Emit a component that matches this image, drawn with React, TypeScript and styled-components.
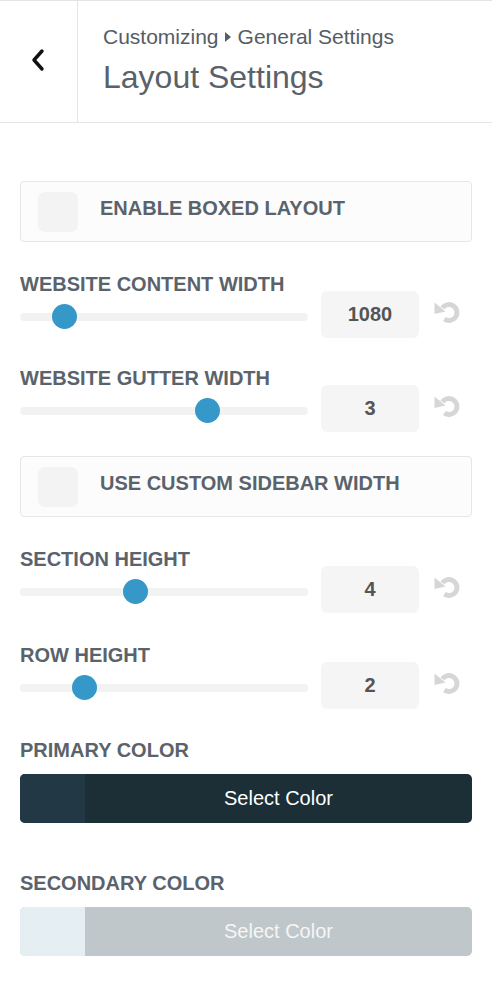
import React from "react";
import styled, { createGlobalStyle } from "styled-components";

const GlobalStyle = createGlobalStyle`
    html, body {
        margin: 0;
        padding: 0;
        background: #ffffff;
    }
    body {
        font-family: "Liberation Sans", Arial, sans-serif;
        color: #555d66;
    }
    * {
        box-sizing: border-box;
    }
`;

const Page = styled.div`
    width: 492px;
    min-height: 990px;
    background: #ffffff;
`;

const Header = styled.header`
    display: flex;
    height: 123px;
    border-top: 1px solid #e2e4e7;
    border-bottom: 1px solid #e2e4e7;
`;

const BackButton = styled.button`
    width: 78px;
    flex-shrink: 0;
    border: none;
    border-right: 1px solid #e2e4e7;
    background: #ffffff;
    display: flex;
    align-items: center;
    justify-content: center;
    padding: 0 1px 3px 0;
    cursor: pointer;
`;

const HeaderText = styled.div`
    padding: 24px 0 0 25px;
    display: flex;
    flex-direction: column;
    gap: 9px;
`;

const Breadcrumb = styled.div`
    display: flex;
    align-items: center;
    font-size: 21px;
    line-height: 24px;
    color: #555d66;
`;

const Caret = styled.span`
    display: inline-block;
    width: 0;
    height: 0;
    border-left: 6px solid #555d66;
    border-top: 5px solid transparent;
    border-bottom: 5px solid transparent;
    margin: 0 7px 0 6px;
`;

const Title = styled.h1`
    margin: 0;
    font-size: 32px;
    line-height: 38px;
    font-weight: 400;
    color: #59616a;
`;

const Panel = styled.div`
    padding: 58px 20px 0 20px;
    display: flex;
    flex-direction: column;
`;

const Block = styled.div<{ $mt?: number }>`
    margin-top: ${(props) => props.$mt ?? 0}px;
`;

const Label = styled.div`
    font-size: 20px;
    line-height: 14px;
    font-weight: 700;
    text-transform: uppercase;
    color: #5a636b;
    white-space: nowrap;
`;

const CheckRow = styled.label`
    display: flex;
    align-items: center;
    gap: 22px;
    height: 61px;
    padding: 0 17px;
    border: 1px solid #e6e6e6;
    border-radius: 4px;
    background: #fcfcfc;
    cursor: pointer;
    ${Label} {
        padding-bottom: 7px;
    }
`;

const CheckBox = styled.span`
    width: 40px;
    height: 40px;
    border-radius: 7px;
    background: #f3f3f3;
    flex-shrink: 0;
`;

const SliderGrid = styled.div`
    display: grid;
    grid-template-columns: 1fr 98px 40px;
    column-gap: 13px;
    ${Label} {
        grid-column: 1 / -1;
    }
`;

const Track = styled.div`
    position: relative;
    align-self: center;
    margin-top: 4px;
    height: 8px;
    border-radius: 4px;
    background: #f2f2f2;
`;

const Thumb = styled.span`
    position: absolute;
    top: 50%;
    width: 25px;
    height: 25px;
    margin: -12.5px 0 0 -12.5px;
    border-radius: 50%;
    background: #3598c8;
`;

const NumberBox = styled.div`
    height: 47px;
    border-radius: 6px;
    background: #f5f5f5;
    display: flex;
    align-items: center;
    justify-content: center;
    font-size: 20px;
    font-weight: 700;
    color: #555555;
`;

const ResetButton = styled.span`
    align-self: center;
    display: flex;
    padding-left: 1px;
    margin-bottom: 6px;
`;

const ColorButton = styled.div<{ $swatch: string; $bg: string; $text: string }>`
    display: flex;
    height: 49px;
    margin-top: 17px;
    border-radius: 5px;
    overflow: hidden;
    background: ${(props) => props.$bg};
    color: ${(props) => props.$text};
    span:first-child {
        width: 65px;
        background: ${(props) => props.$swatch};
    }
    span:last-child {
        flex: 1;
        display: flex;
        align-items: center;
        justify-content: center;
        font-size: 20px;
    }
`;

// counter-clockwise reset arrow
const ResetIcon = () => (
    <svg width="28" height="24" viewBox="0 0 28 24">
        <path d="M9.45 7.91 A8 8 0 1 1 11.41 19.05" fill="none" stroke="#d6d6d6" strokeWidth="5" />
        <path d="M1.5 2.5 L1.5 14 L12.5 11.5 Z" fill="#d6d6d6" />
    </svg>
);

const BackIcon = () => (
    <svg width="14" height="24" viewBox="0 0 14 24">
        <path d="M11 3 L3 12 L11 21" fill="none" stroke="#111" strokeWidth="3.4" strokeLinecap="round" strokeLinejoin="round" />
    </svg>
);

interface ISlider {
    label: string;
    value: number;
    pos: number;
    mt: number;
}

function Slider({ label, value, pos, mt }: ISlider) {
    return (
        <Block $mt={mt}>
            <SliderGrid>
                <Label>{label}</Label>
                <Track>
                    <Thumb style={{ left: `calc(12.5px + (100% - 25px) * ${pos})` }} />
                </Track>
                <NumberBox>{value}</NumberBox>
                <ResetButton>
                    <ResetIcon />
                </ResetButton>
            </SliderGrid>
        </Block>
    );
}

function App() {
    return (
        <Page>
            <GlobalStyle />
            <Header>
                <BackButton>
                    <BackIcon />
                </BackButton>
                <HeaderText>
                    <Breadcrumb>
                        Customizing<Caret />General Settings
                    </Breadcrumb>
                    <Title>Layout Settings</Title>
                </HeaderText>
            </Header>
            <Panel>
                <Block>
                    <CheckRow>
                        <CheckBox />
                        <Label>Enable Boxed Layout</Label>
                    </CheckRow>
                </Block>
                <Slider label="Website Content Width" value={1080} pos={0.12} mt={35} />
                <Slider label="Website Gutter Width" value={3} pos={0.666} mt={33} />
                <Block $mt={24}>
                    <CheckRow>
                        <CheckBox />
                        <Label>Use Custom Sidebar Width</Label>
                    </CheckRow>
                </Block>
                <Slider label="Section Height" value={4} pos={0.39} mt={35} />
                <Slider label="Row Height" value={2} pos={0.197} mt={35} />
                <Block $mt={34}>
                    <Label>Primary Color</Label>
                    <ColorButton $swatch="#233845" $bg="#1c2e36" $text="#ffffff">
                        <span />
                        <span>Select Color</span>
                    </ColorButton>
                </Block>
                <Block $mt={53}>
                    <Label>Secondary Color</Label>
                    <ColorButton $swatch="#e5eef2" $bg="#c0c7ca" $text="#f4f6f7">
                        <span />
                        <span>Select Color</span>
                    </ColorButton>
                </Block>
            </Panel>
        </Page>
    );
}

export default App;
